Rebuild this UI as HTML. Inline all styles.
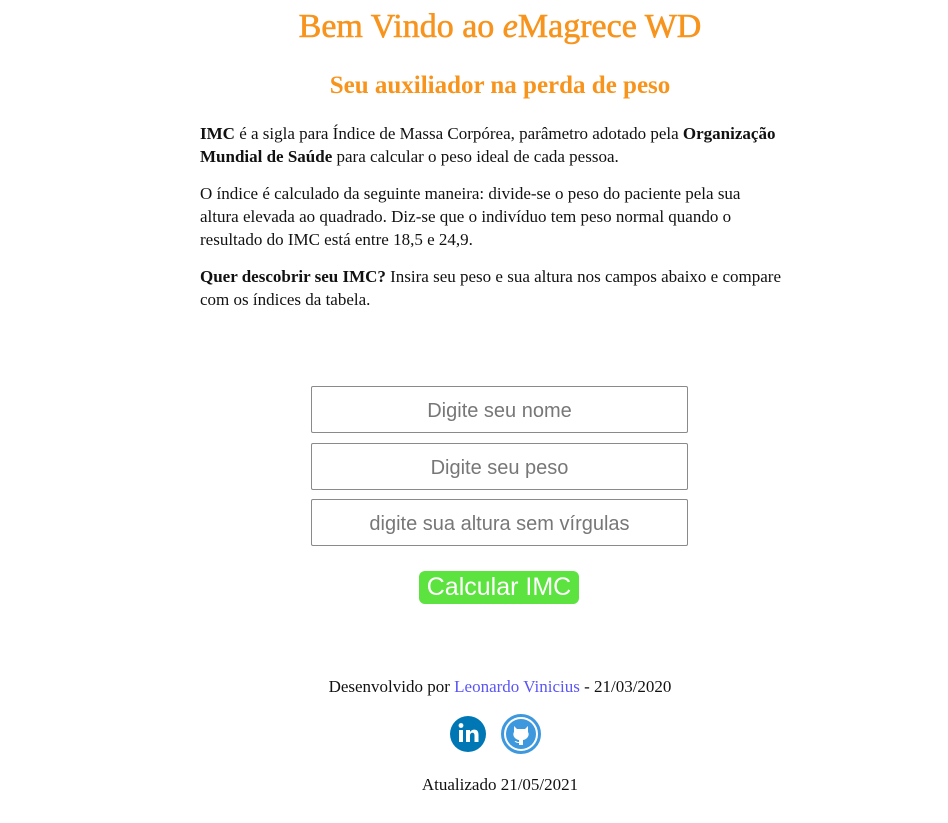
<!DOCTYPE html>
<html><head><meta charset="utf-8"><style>
body{margin:0;background:#fff;font-family:"Liberation Serif",serif;color:#111;width:948px;height:823px;overflow:hidden;position:relative}
.a{position:absolute;left:0;width:1000px;text-align:center}
h1{position:absolute;top:8px;left:0;width:1000px;margin:0;text-align:center;color:#f7941d;font-weight:normal;font-size:34px;font-family:"Liberation Serif",serif;-webkit-text-stroke:0.6px #f7941d}
h2{position:absolute;top:72px;left:0;width:1000px;margin:0;text-align:center;color:#f7941d;font-size:25px;font-weight:bold}
.t{position:absolute;left:200px;width:579px;font-size:17px;line-height:23px}
.t p{margin:0 0 14px}
input{position:absolute;left:311px;width:377px;height:47px;box-sizing:border-box;border:1px solid #8a8a8a;border-radius:2px;text-align:center;font-family:"Liberation Sans",sans-serif;font-size:20px;padding:4px 0 0}
input::placeholder{color:#777}
.btn{position:absolute;left:419px;top:571px;width:160px;height:33px;background:#5ce33f;border-radius:6px;color:#fff;font-family:"Liberation Sans",sans-serif;font-size:25px;line-height:33px;text-align:center}
</style></head><body>
<h1>Bem Vindo ao <i>e</i>Magrece WD</h1>
<h2>Seu auxiliador na perda de peso</h2>
<div class="t" style="top:122px">
<p><b>IMC</b> é a sigla para Índice de Massa Corpórea, parâmetro adotado pela <b>Organização Mundial de Saúde</b> para calcular o peso ideal de cada pessoa.</p>
<p>O índice é calculado da seguinte maneira: divide-se o peso do paciente pela sua altura elevada ao quadrado. Diz-se que o indivíduo tem peso normal quando o resultado do IMC está entre 18,5 e 24,9.</p>
<p style="width:600px"><b>Quer descobrir seu IMC?</b> Insira seu peso e sua altura nos campos abaixo e compare<br>com os índices da tabela.</p>
</div>
<input style="top:386px" placeholder="Digite seu nome">
<input style="top:443px" placeholder="Digite seu peso">
<input style="top:499px" placeholder="digite sua altura sem vírgulas">
<div class="btn">Calcular IMC</div>
<div class="a" style="top:677px;font-size:17px">Desenvolvido por <span style="color:#5a55f5">Leonardo Vinicius</span> - 21/03/2020</div>
<svg style="position:absolute;left:450px;top:715px" width="36" height="38" viewBox="0 0 36 38"><circle cx="18" cy="19" r="18" fill="#0077b5"/><rect x="9" y="15" width="4" height="12" fill="#fff"/><circle cx="11" cy="10.5" r="2.4" fill="#fff"/><path d="M16 15h4v2c1-1.6 2.5-2.4 4.3-2.4 3 0 4.2 2 4.2 5.2V27h-4v-6.5c0-1.8-.6-2.8-2-2.8s-2.5 1-2.5 2.8V27h-4z" fill="#fff"/></svg>
<svg style="position:absolute;left:501px;top:714px" width="40" height="40" viewBox="0 0 40 40"><circle cx="20" cy="20" r="18.5" fill="#fff" stroke="#3d98dd" stroke-width="3"/><circle cx="20" cy="20" r="15" fill="#3d98dd"/><path d="M13 12l3 3h8l3-3v6c1 1.5 1 4-1 6-1.5 1.5-3.5 2-4 2v5h-4v-2c-2 0-3.5-.5-4.5-2l1.5 0c1 1 2 1 3 1v-2c-.5 0-2.5-.5-4-2-2-2-2-4.5-1-6z" fill="#fff"/></svg>
<div class="a" style="top:775px;font-size:17px">Atualizado 21/05/2021</div>
</body></html>
